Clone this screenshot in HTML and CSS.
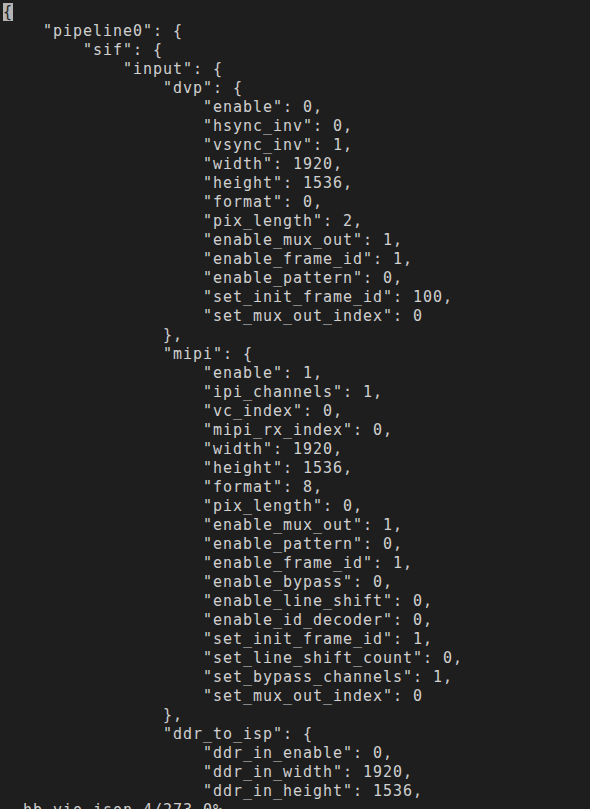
FILE: index.html
```html
<!DOCTYPE html>
<html>
<head>
<meta charset="utf-8">
<link rel="stylesheet" href="styles.css">
</head>
<body>
<pre class="term"><span class="cursor">{</span>
    "pipeline0": {
        "sif": {
            "input": {
                "dvp": {
                    "enable": 0,
                    "hsync_inv": 0,
                    "vsync_inv": 1,
                    "width": 1920,
                    "height": 1536,
                    "format": 0,
                    "pix_length": 2,
                    "enable_mux_out": 1,
                    "enable_frame_id": 1,
                    "enable_pattern": 0,
                    "set_init_frame_id": 100,
                    "set_mux_out_index": 0
                },
                "mipi": {
                    "enable": 1,
                    "ipi_channels": 1,
                    "vc_index": 0,
                    "mipi_rx_index": 0,
                    "width": 1920,
                    "height": 1536,
                    "format": 8,
                    "pix_length": 0,
                    "enable_mux_out": 1,
                    "enable_pattern": 0,
                    "enable_frame_id": 1,
                    "enable_bypass": 0,
                    "enable_line_shift": 0,
                    "enable_id_decoder": 0,
                    "set_init_frame_id": 1,
                    "set_line_shift_count": 0,
                    "set_bypass_channels": 1,
                    "set_mux_out_index": 0
                },
                "ddr_to_isp": {
                    "ddr_in_enable": 0,
                    "ddr_in_width": 1920,
                    "ddr_in_height": 1536,
  hb_vio.json 4/273 0%</pre>
</body>
</html>
```
FILE: styles.css
```css
html, body {
  margin: 0;
  padding: 0;
  background: #1e1e1e;
  height: 809px;
  overflow: hidden;
}
.term {
  margin: 0;
  padding: 3px 0 0 3px;
  font-family: "DejaVu Sans Mono", monospace;
  font-size: 15px;
  letter-spacing: 0.97px;
  line-height: 19px;
  color: #d0d0d0;
  white-space: pre;
}
.cursor {
  background: #b4b4b4;
  color: #1e1e1e;
}
```
